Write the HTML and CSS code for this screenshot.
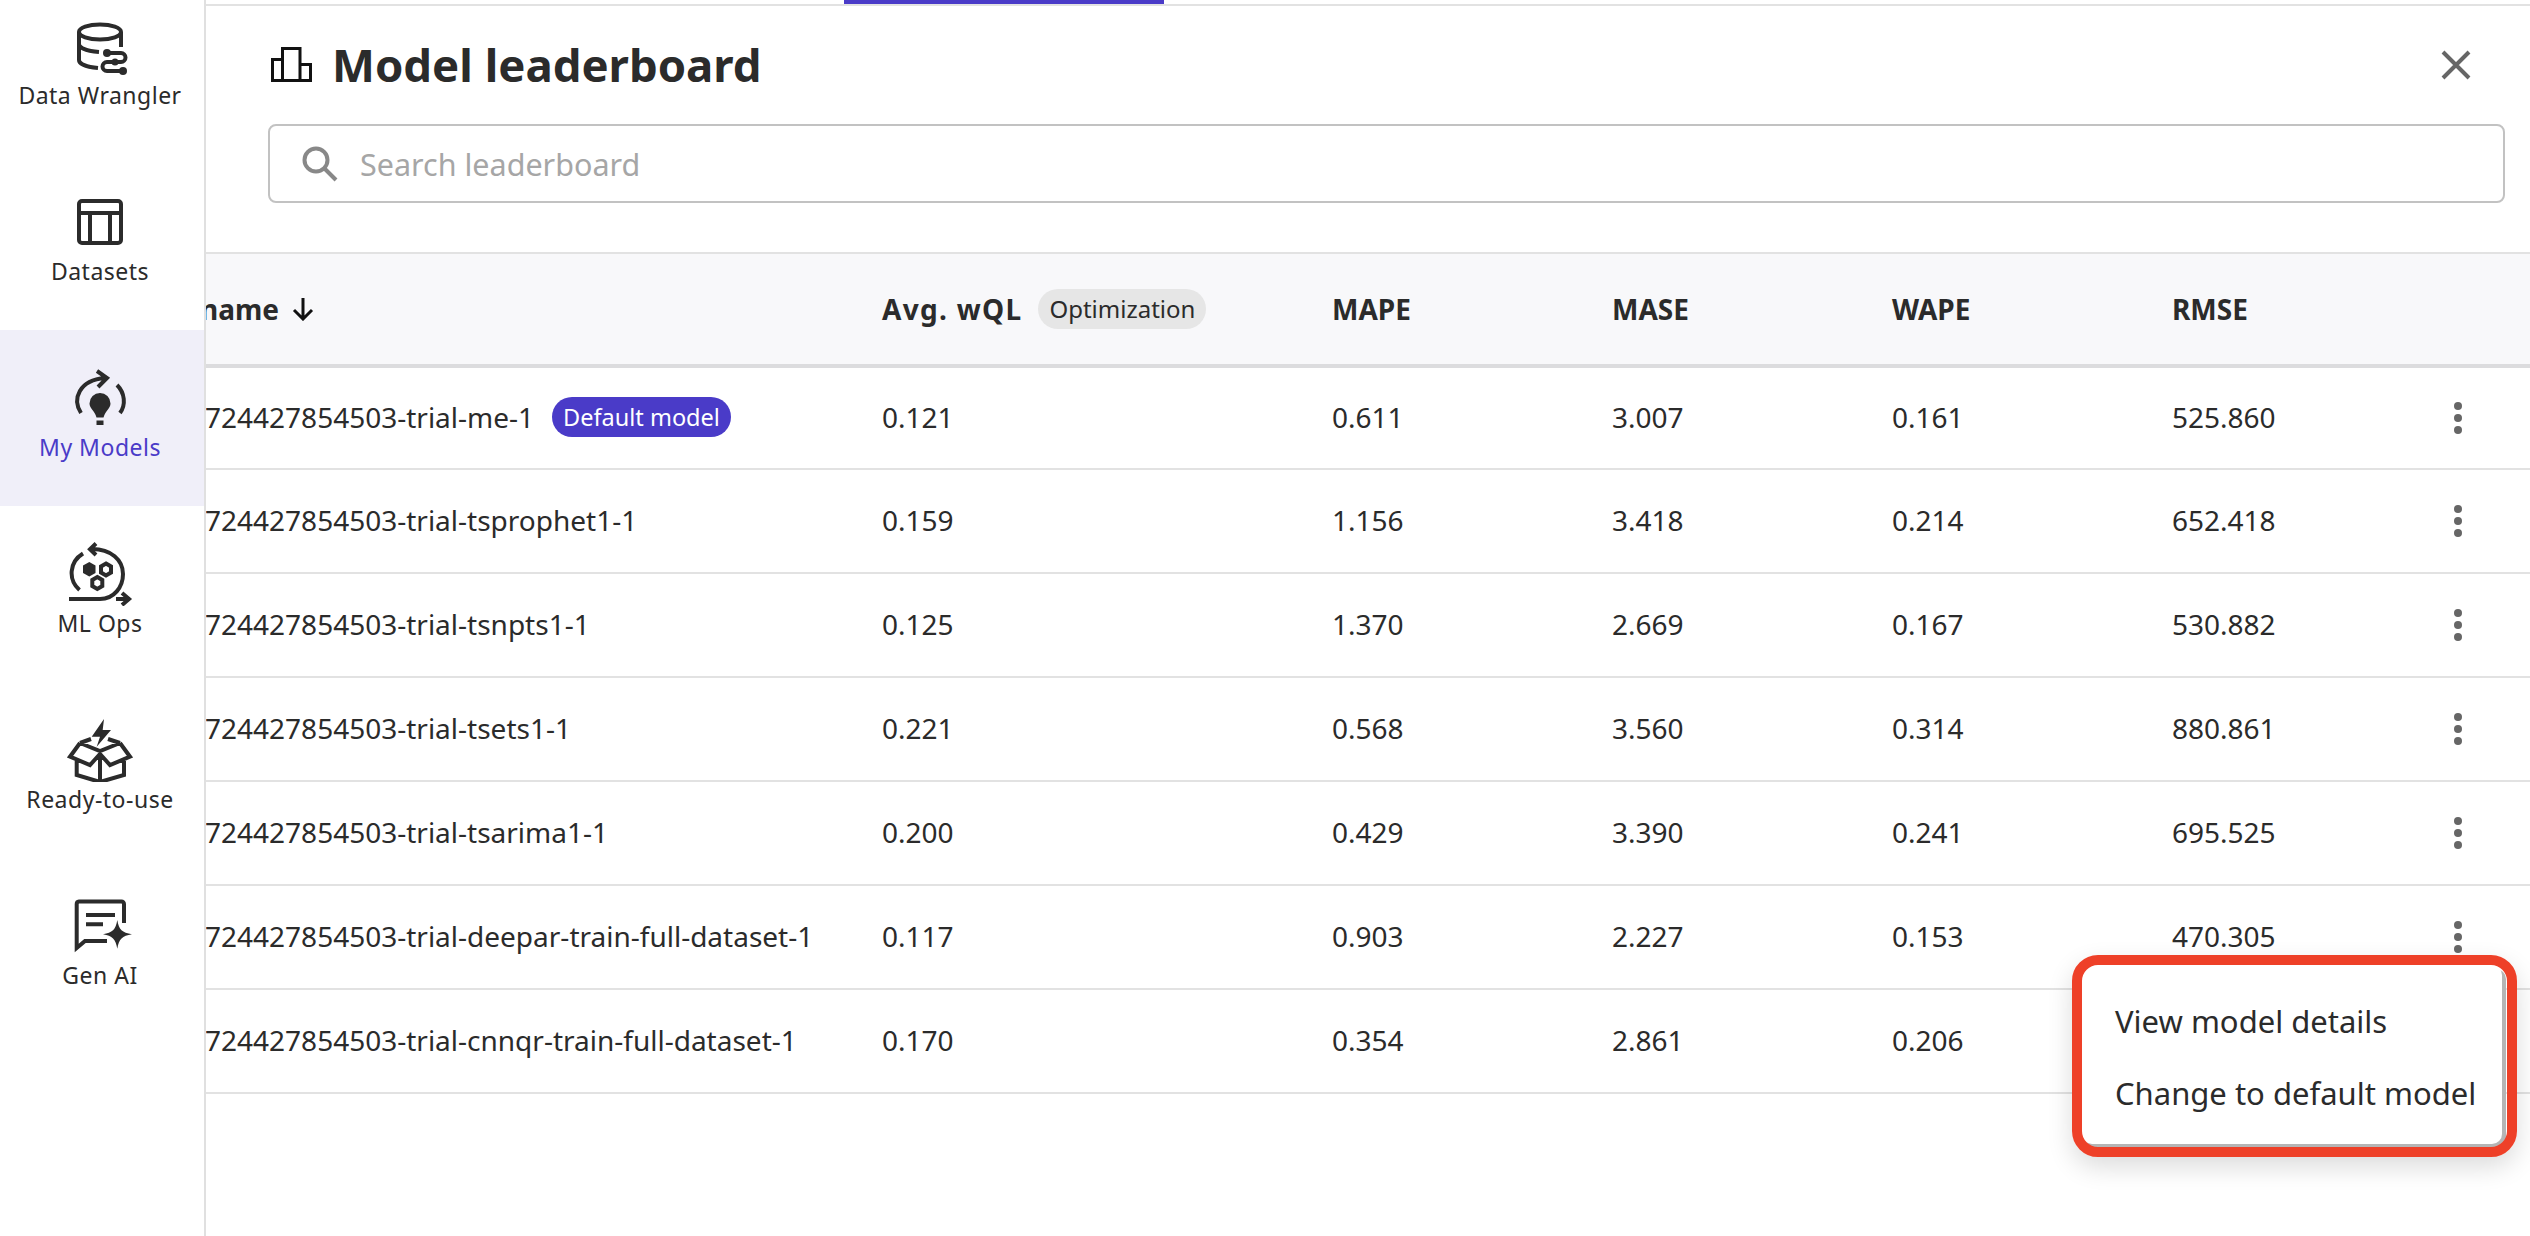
FILE: index.html
```html
<!DOCTYPE html>
<html lang="en">
<head>
<meta charset="utf-8">
<title>Model leaderboard</title>
<link rel="stylesheet" href="styles.css">
</head>
<body>
<div class="app">
  <nav class="sidebar">
    <ul class="nav-list">
      <li class="nav-item">
        <svg class="nav-icon" viewBox="0 0 72 64"><ellipse cx="36" cy="18" rx="21" ry="7.5"/><path d="M15 18V46c0 4 8 7 19 8M15 30c0 4 8 7 20 8M57 18V33"/><path d="M43 39H57a4.5 4.5 0 0 1 0 9H43a4.5 4.5 0 0 0 0 9H59"/><circle class="fill" cx="43" cy="39" r="4"/><circle class="fill" cx="51" cy="48" r="3.5"/><circle class="fill" cx="59" cy="57" r="4"/></svg>
        <span class="nav-label">Data Wrangler</span>
      </li>
      <li class="nav-item">
        <svg class="nav-icon" viewBox="0 0 72 64"><rect x="15" y="11" width="42" height="42" rx="3"/><path d="M15 23H57M26 23V53M46 23V53"/></svg>
        <span class="nav-label">Datasets</span>
      </li>
      <li class="nav-item active">
        <svg class="nav-icon" viewBox="0 0 72 64"><path d="M17 47C8 33 15 14 41 12M33 5L43 12L34 21M53 19C61 27 62 39 56 47"/><path class="fill" d="M36 27a10.5 10.5 0 0 1 10.5 10.5c0 5-5 7-7 14h-7c-2-7-7-9-7-14A10.5 10.5 0 0 1 36 27z"/><rect class="fill" x="32.5" y="54.5" width="7" height="4.5"/></svg>
        <span class="nav-label">My Models</span>
      </li>
      <li class="nav-item">
        <svg class="nav-icon" viewBox="0 0 72 64"><path d="M5 57H36C50 57 59 45 59 32C59 18 47 7 28 7M32 1.5L26 7.3L32 13M19 11.5C5 20 4 38 15.5 48M52 57H64M58 51L65 57L58 63"/><polygon class="fill" points="25.3,20 31.5,23.5 31.5,31 25.3,34.5 19,31 19,23.5"/><polygon points="42,21.5 47,24.5 47,30.5 42,33.5 37,30.5 37,24.5"/><polygon points="33.3,35 38.3,38 38.3,44 33.3,47 28.3,44 28.3,38"/></svg>
        <span class="nav-label">ML Ops</span>
      </li>
      <li class="nav-item">
        <svg class="nav-icon" viewBox="0 0 72 64"><path class="fill" d="M40 1L27.7 18.7H36L32.7 28.7L47 12H38.7z"/><path d="M12.7 43V57L36 64L60 57V43M36 38V64M16 25L6 38.7L26 47L36 36L46 47L66 38.7L56 25M16 25L27 21M56 25L44 21M16 25L36 33L56 25"/></svg>
        <span class="nav-label">Ready-to-use</span>
      </li>
      <li class="nav-item">
        <svg class="nav-icon" viewBox="0 0 72 64"><path d="M60 29V10a2.5 2.5 0 0 0-2.5-2.5H15A2.5 2.5 0 0 0 12.7 10V54L21 47H43M22 21H51M22 30.3H39"/><path class="fill" d="M53.3 26C55 36 58 38.5 68 40.3C58 42 55 45 53.3 54.7C51.5 45 48.5 42 39 40.3C48.5 38.5 51.5 36 53.3 26z"/></svg>
        <span class="nav-label">Gen AI</span>
      </li>
    </ul>
  </nav>

  <main class="main">
    <div class="tabbar"><span class="tab-indicator"></span></div>

    <header class="title-row">
      <svg class="title-icon" viewBox="0 0 44 38"><path d="M1.5 35.5V14.5H11.500V35.500M11.500 14.500V3.500H29V35.500M29 19.500H39.500V35.500M0 35.500H41"/></svg>
      <h1 class="title">Model leaderboard</h1>
      <svg class="close-icon" viewBox="0 0 30 30"><path d="M2 2L28 28M28 2L2 28"/></svg>
    </header>

    <div class="search">
      <svg class="search-icon" viewBox="0 0 36 36"><circle cx="14" cy="14" r="11.500"/><path d="M22 22L34 34"/></svg>
      <span class="search-placeholder">Search leaderboard</span>
    </div>

    <section class="table">
      <div class="row head">
        <div class="cell name"><span class="head-name">Model name</span>
          <svg class="sort-icon" viewBox="0 0 24 24"><path d="M12 1V22M3 13L12 22L21 13"/></svg>
        </div>
        <div class="cell"><span class="head-wide">Avg. wQL</span><span class="badge-opt">Optimization</span></div>
        <div class="cell">MAPE</div>
        <div class="cell">MASE</div>
        <div class="cell">WAPE</div>
        <div class="cell">RMSE</div>
        <div class="cell"></div>
      </div>

      <div class="row first">
        <div class="cell name"><span class="name-text">1724427854503-trial-me-1</span><span class="badge-default">Default model</span></div>
        <div class="cell">0.121</div><div class="cell">0.611</div><div class="cell">3.007</div><div class="cell">0.161</div><div class="cell">525.860</div>
        <div class="cell action"><span class="kebab"><i></i><i></i><i></i></span></div>
      </div>
      <div class="row">
        <div class="cell name"><span class="name-text">1724427854503-trial-tsprophet1-1</span></div>
        <div class="cell">0.159</div><div class="cell">1.156</div><div class="cell">3.418</div><div class="cell">0.214</div><div class="cell">652.418</div>
        <div class="cell action"><span class="kebab"><i></i><i></i><i></i></span></div>
      </div>
      <div class="row">
        <div class="cell name"><span class="name-text">1724427854503-trial-tsnpts1-1</span></div>
        <div class="cell">0.125</div><div class="cell">1.370</div><div class="cell">2.669</div><div class="cell">0.167</div><div class="cell">530.882</div>
        <div class="cell action"><span class="kebab"><i></i><i></i><i></i></span></div>
      </div>
      <div class="row">
        <div class="cell name"><span class="name-text">1724427854503-trial-tsets1-1</span></div>
        <div class="cell">0.221</div><div class="cell">0.568</div><div class="cell">3.560</div><div class="cell">0.314</div><div class="cell">880.861</div>
        <div class="cell action"><span class="kebab"><i></i><i></i><i></i></span></div>
      </div>
      <div class="row">
        <div class="cell name"><span class="name-text">1724427854503-trial-tsarima1-1</span></div>
        <div class="cell">0.200</div><div class="cell">0.429</div><div class="cell">3.390</div><div class="cell">0.241</div><div class="cell">695.525</div>
        <div class="cell action"><span class="kebab"><i></i><i></i><i></i></span></div>
      </div>
      <div class="row">
        <div class="cell name"><span class="name-text">1724427854503-trial-deepar-train-full-dataset-1</span></div>
        <div class="cell">0.117</div><div class="cell">0.903</div><div class="cell">2.227</div><div class="cell">0.153</div><div class="cell">470.305</div>
        <div class="cell action"><span class="kebab"><i></i><i></i><i></i></span></div>
      </div>
      <div class="row">
        <div class="cell name"><span class="name-text">1724427854503-trial-cnnqr-train-full-dataset-1</span></div>
        <div class="cell">0.170</div><div class="cell">0.354</div><div class="cell">2.861</div><div class="cell">0.206</div><div class="cell"></div>
        <div class="cell action"></div>
      </div>
    </section>
  </main>

  <div class="menu">
    <div class="menu-item">View model details</div>
    <div class="menu-item">Change to default model</div>
  </div>
  <div class="annotation"></div>
</div>
</body>
</html>
```

FILE: styles.css
```css
* { box-sizing: border-box; }
html, body { margin: 0; padding: 0; background: #fff; }
body { font-family: "Noto Sans", "Liberation Sans", sans-serif; color: #2b2b2b; overflow: hidden; }

.app { position: relative; display: flex; width: 2530px; height: 1236px; overflow: hidden; }

/* Sidebar */
.sidebar { flex: 0 0 206px; height: 100%; border-right: 2px solid #e0e0e0; overflow: hidden; }
.nav-list { list-style: none; margin: -22px 0 0; padding: 0; }
.nav-item { display: flex; flex-direction: column; align-items: center; height: 176px; padding: 36px 4px 0 0; }
.nav-item.active { background: #f0eff9; }
.nav-item.active .nav-label { color: #4a3bc8; }
.nav-icon { width: 72px; height: 64px; flex: none; fill: none; stroke: #2b2b2b; stroke-width: 4; }
.nav-icon .fill { fill: #2b2b2b; stroke: none; }
.nav-label { font-size: 23px; line-height: 34px; letter-spacing: .5px; white-space: nowrap; }

/* Main */
.main { flex: 1; min-width: 0; display: flex; flex-direction: column; }
.tabbar { height: 6px; flex: none; border-bottom: 2px solid #e2e2e2; }
.tab-indicator { display: block; width: 320px; height: 4px; margin-left: 638px; background: #4a3bc8; }

.title-row { display: flex; align-items: center; height: 118px; flex: none; padding: 0 59px 0 65px; }
.title-icon { width: 44px; height: 38px; flex: none; fill: none; stroke: #111; stroke-width: 3; margin-top: -2px; }
.title { margin: -2px 0 0 17px; font-size: 45.5px; line-height: 60px; font-weight: 700; flex: 1; }
.close-icon { width: 30px; height: 30px; flex: none; fill: none; stroke: #666; stroke-width: 4; }

.search { display: flex; align-items: center; flex: none; height: 79px; margin: 0 25px 0 62px; padding-left: 32px; border: 2px solid #c2c2c2; border-radius: 8px; }
.search-icon { width: 36px; height: 36px; flex: none; fill: none; stroke: #888; stroke-width: 4; }
.search-placeholder { margin: 1px 0 0 22px; font-size: 30.5px; color: #a6a6a6; }

/* Table */
.table { margin-top: 49px; flex: none; }
.row { display: grid; grid-template-columns: 676px 450px 280px 280px 280px 282px 76px; height: 104px; border-bottom: 2px solid #e2e2e2; font-size: 28px; }
.row.first { height: 102px; }
.row .cell { padding-bottom: 2px; }
.row.head { height: 116px; background: #f8f8fa; border-top: 2px solid #e2e2e2; border-bottom: 4px solid #dcdcde; font-weight: 700; }
.row.head .cell { padding-bottom: 0; }
.cell { display: flex; align-items: center; min-width: 0; white-space: nowrap; }
.cell.name { overflow: hidden; }
.head-name { flex: none; margin-left: -100px; }
.head-wide { flex: none; letter-spacing: 1.3px; }
.name-text { flex: none; margin-left: -17px; }
.sort-icon { width: 24px; height: 24px; flex: none; margin-left: 12px; fill: none; stroke: #111; stroke-width: 3; }

.badge-default { flex: none; margin-left: 18px; height: 40px; padding: 0 11px; border-radius: 20px; background: #4a3bc8; color: #fff; font-size: 23.5px; line-height: 40px; }
.badge-opt { flex: none; margin-left: 16px; height: 40px; padding: 0 11px; border-radius: 20px; background: #e6e6e6; font-size: 24px; font-weight: 400; line-height: 40px; }

.cell.action { padding-bottom: 0; }
.kebab { display: flex; flex-direction: column; gap: 4px; }
.kebab i { display: block; width: 8px; height: 8px; border-radius: 50%; background: #666; }

/* Overlays */
.menu { position: absolute; left: 2082px; top: 965px; width: 420px; height: 179px; padding: 20px 0 0 33px; background: #fff; border-radius: 10px; box-shadow: 4px 4px 0 #b5b5b5; }
.menu-item { font-size: 31px; line-height: 72px; white-space: nowrap; }
.annotation { position: absolute; left: 2072px; top: 955px; width: 445px; height: 202px; border: 10px solid #ee4028; border-radius: 26px; box-shadow: 0 10px 26px rgba(0, 0, 0, .14); }
```
